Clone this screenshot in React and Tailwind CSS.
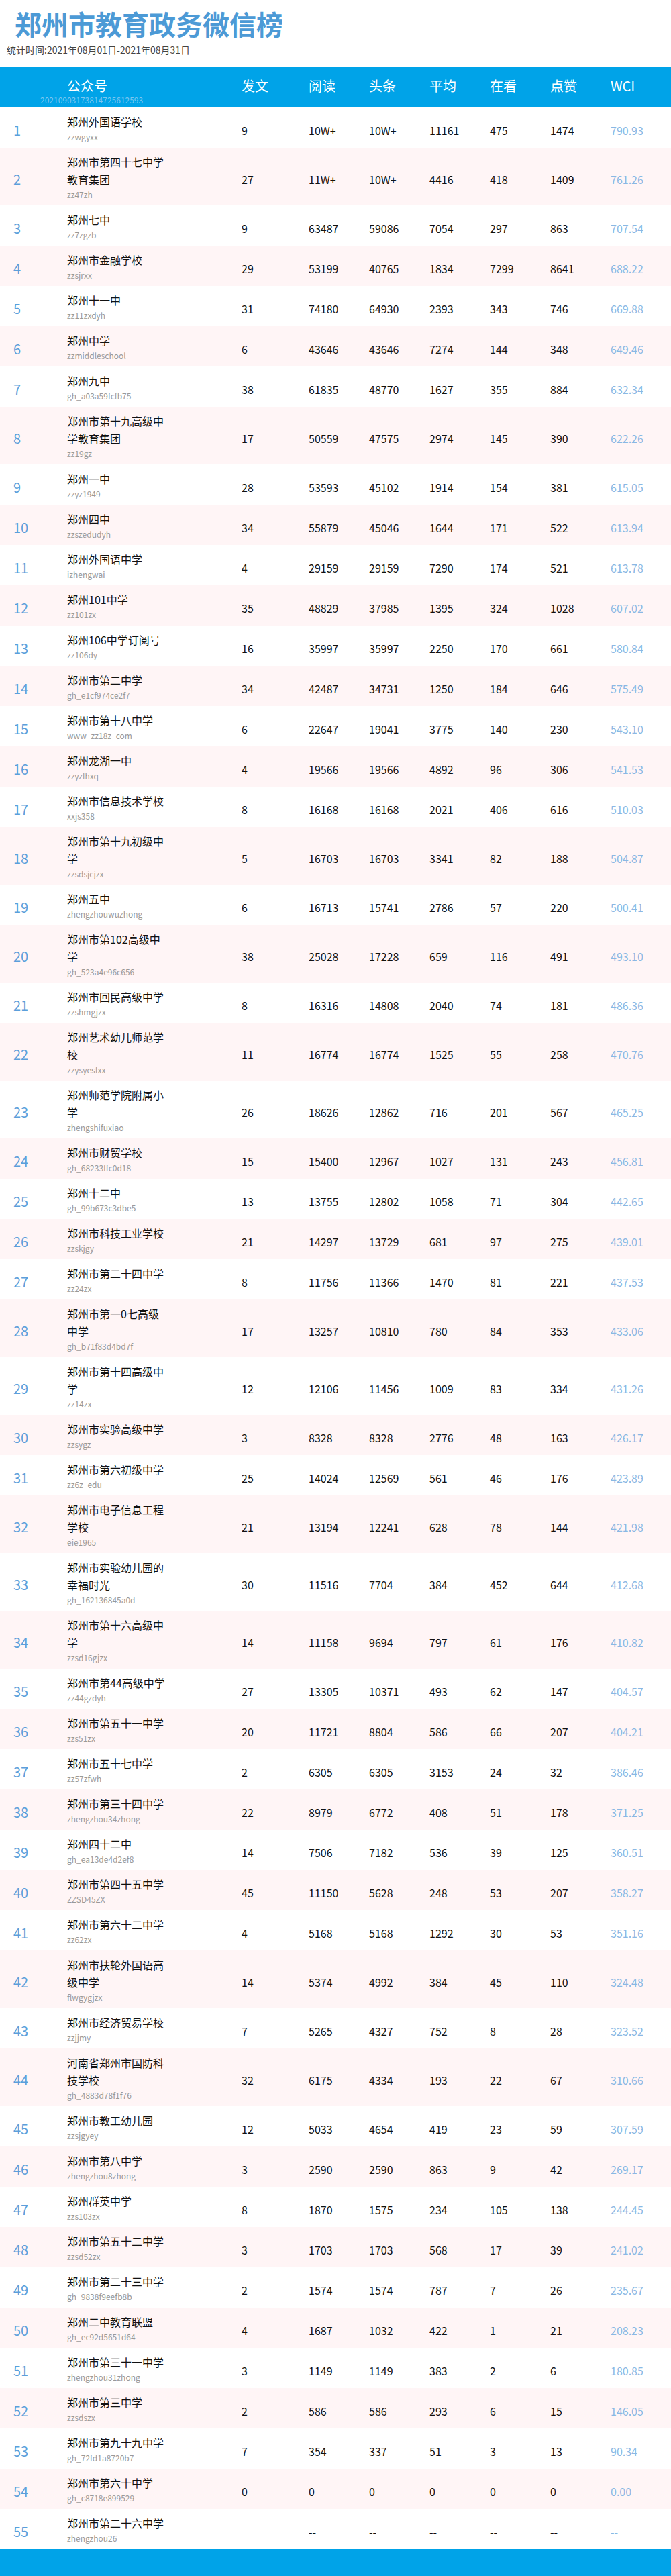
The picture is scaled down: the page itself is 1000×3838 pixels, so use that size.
const raw = `郑州外国语学校|zzwgyxx|9|10W+|10W+|11161|475|1474|790.93
郑州市第四十七中学教育集团|zz47zh|27|11W+|10W+|4416|418|1409|761.26
郑州七中|zz7zgzb|9|63487|59086|7054|297|863|707.54
郑州市金融学校|zzsjrxx|29|53199|40765|1834|7299|8641|688.22
郑州十一中|zz11zxdyh|31|74180|64930|2393|343|746|669.88
郑州中学|zzmiddleschool|6|43646|43646|7274|144|348|649.46
郑州九中|gh_a03a59fcfb75|38|61835|48770|1627|355|884|632.34
郑州市第十九高级中学教育集团|zz19gz|17|50559|47575|2974|145|390|622.26
郑州一中|zzyz1949|28|53593|45102|1914|154|381|615.05
郑州四中|zzszedudyh|34|55879|45046|1644|171|522|613.94
郑州外国语中学|izhengwai|4|29159|29159|7290|174|521|613.78
郑州101中学|zz101zx|35|48829|37985|1395|324|1028|607.02
郑州106中学订阅号|zz106dy|16|35997|35997|2250|170|661|580.84
郑州市第二中学|gh_e1cf974ce2f7|34|42487|34731|1250|184|646|575.49
郑州市第十八中学|www_zz18z_com|6|22647|19041|3775|140|230|543.10
郑州龙湖一中|zzyzlhxq|4|19566|19566|4892|96|306|541.53
郑州市信息技术学校|xxjs358|8|16168|16168|2021|406|616|510.03
郑州市第十九初级中学|zzsdsjcjzx|5|16703|16703|3341|82|188|504.87
郑州五中|zhengzhouwuzhong|6|16713|15741|2786|57|220|500.41
郑州市第102高级中学|gh_523a4e96c656|38|25028|17228|659|116|491|493.10
郑州市回民高级中学|zzshmgjzx|8|16316|14808|2040|74|181|486.36
郑州艺术幼儿师范学校|zzysyesfxx|11|16774|16774|1525|55|258|470.76
郑州师范学院附属小学|zhengshifuxiao|26|18626|12862|716|201|567|465.25
郑州市财贸学校|gh_68233ffc0d18|15|15400|12967|1027|131|243|456.81
郑州十二中|gh_99b673c3dbe5|13|13755|12802|1058|71|304|442.65
郑州市科技工业学校|zzskjgy|21|14297|13729|681|97|275|439.01
郑州市第二十四中学|zz24zx|8|11756|11366|1470|81|221|437.53
郑州市第一0七高级中学|gh_b71f83d4bd7f|17|13257|10810|780|84|353|433.06
郑州市第十四高级中学|zz14zx|12|12106|11456|1009|83|334|431.26
郑州市实验高级中学|zzsygz|3|8328|8328|2776|48|163|426.17
郑州市第六初级中学|zz6z_edu|25|14024|12569|561|46|176|423.89
郑州市电子信息工程学校|eie1965|21|13194|12241|628|78|144|421.98
郑州市实验幼儿园的幸福时光|gh_162136845a0d|30|11516|7704|384|452|644|412.68
郑州市第十六高级中学|zzsd16gjzx|14|11158|9694|797|61|176|410.82
郑州市第44高级中学|zz44gzdyh|27|13305|10371|493|62|147|404.57
郑州市第五十一中学|zzs51zx|20|11721|8804|586|66|207|404.21
郑州市五十七中学|zz57zfwh|2|6305|6305|3153|24|32|386.46
郑州市第三十四中学|zhengzhou34zhong|22|8979|6772|408|51|178|371.25
郑州四十二中|gh_ea13de4d2ef8|14|7506|7182|536|39|125|360.51
郑州市第四十五中学|ZZSD45ZX|45|11150|5628|248|53|207|358.27
郑州市第六十二中学|zz62zx|4|5168|5168|1292|30|53|351.16
郑州市扶轮外国语高级中学|flwgygjzx|14|5374|4992|384|45|110|324.48
郑州市经济贸易学校|zzjjmy|7|5265|4327|752|8|28|323.52
河南省郑州市国防科技学校|gh_4883d78f1f76|32|6175|4334|193|22|67|310.66
郑州市教工幼儿园|zzsjgyey|12|5033|4654|419|23|59|307.59
郑州市第八中学|zhengzhou8zhong|3|2590|2590|863|9|42|269.17
郑州群英中学|zzs103zx|8|1870|1575|234|105|138|244.45
郑州市第五十二中学|zzsd52zx|3|1703|1703|568|17|39|241.02
郑州市第二十三中学|gh_9838f9eefb8b|2|1574|1574|787|7|26|235.67
郑州二中教育联盟|gh_ec92d5651d64|4|1687|1032|422|1|21|208.23
郑州市第三十一中学|zhengzhou31zhong|3|1149|1149|383|2|6|180.85
郑州市第三中学|zzsdszx|2|586|586|293|6|15|146.05
郑州市第九十九中学|gh_72fd1a8720b7|7|354|337|51|3|13|90.34
郑州市第六十中学|gh_c8718e899529|0|0|0|0|0|0|0.00
郑州市第二十六中学|zhengzhou26| |--|--|--|--|--|--`;

const rows = raw.split("\n").map((l) => l.split("|"));
const font = { fontFamily: '"Noto Sans CJK SC", "Noto Sans", sans-serif' };

export default function App() {
  return (
    <div className="w-[1000px] bg-white" style={font}>
      <div className="h-[100px] px-[22px] pt-[12px]">
        <div className="text-[40px] leading-[46px] font-bold text-[#4c9ad6]">郑州市教育政务微信榜</div>
        <div className="text-[14px] leading-[20px] text-[#444] -ml-[12px] mt-[6px]">统计时间:2021年08月01日-2021年08月31日</div>
      </div>
      <div className="h-[60px] bg-[#00a3e8] flex text-white text-[20px] relative">
        <div className="w-[100px]" />
        <div className="w-[260px] pt-[13px]">公众号</div>
        <div className="w-[100px] pt-[13px]">发文</div>
        {["阅读", "头条", "平均", "在看", "点赞", "WCI"].map((h) => (
          <div key={h} className="w-[90px] pt-[13px]">{h}</div>
        ))}
        <div className="absolute left-[60px] top-[42px] text-[12px] leading-[14px] text-[#7cc6ef]">20210903173814725612593</div>
      </div>
      {rows.map((r, i) => (
        <div key={i} className={`flex items-center text-[16px] ${i % 2 ? "bg-[#fff5f6]" : "bg-white"}`}>
          <div className="w-[100px] pl-[20px] pt-[8px] text-[20px] text-[#5b9fdb]">{i + 1}</div>
          <div className="w-[260px] pt-[8px] pb-[6px]">
            <div className="w-[150px] leading-[26px] text-[#111]">{r[0]}</div>
            <div className="text-[12px] leading-[20px] text-[#999]">{r[1]}</div>
          </div>
          <div className="w-[100px] pt-[8px] text-[#111]">{r[2]}</div>
          {r.slice(3, 8).map((v, j) => (
            <div key={j} className="w-[90px] pt-[8px] text-[#111]">{v}</div>
          ))}
          <div className="w-[90px] pt-[8px] text-[#8ab8e4]">{r[8]}</div>
        </div>
      ))}
      <div className="h-[40px] bg-[#00a3e8]" />
    </div>
  );
}
